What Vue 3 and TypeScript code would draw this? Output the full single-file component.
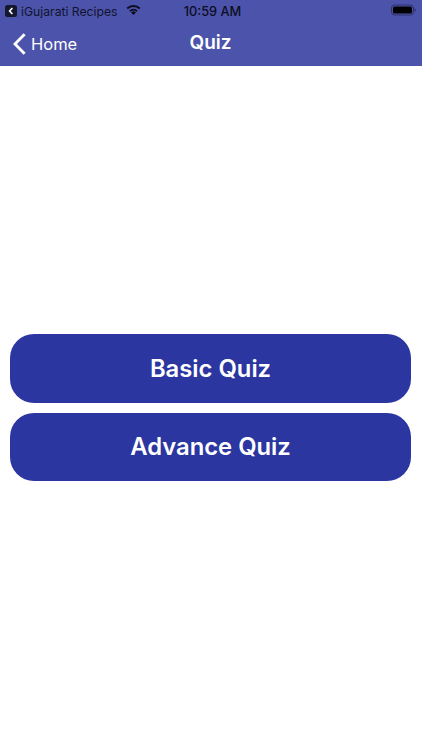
<script setup lang="ts">
const quizzes: string[] = ['Basic Quiz', 'Advance Quiz']
</script>

<template>
  <div class="page">
    <header class="header">
      <div class="status">
        <div class="status-left">
          <svg class="back-app" width="12" height="12" viewBox="0 0 12 12">
            <rect width="12" height="12" rx="2.5" fill="#15172e" />
            <path d="M7.4 3 L4.6 6 L7.4 9" fill="none" stroke="#fff" stroke-width="1.6" />
          </svg>
          <span class="app-name">iGujarati Recipes</span>
          <svg class="wifi" width="15" height="11" viewBox="0 0 15 11">
            <path d="M7.5 10.6 L5.2 8.1 A3.3 3.3 0 0 1 9.8 8.1 Z" fill="#0c0d1c" />
            <path d="M3.6 6.4 A5.6 5.6 0 0 1 11.4 6.4 L10.3 7.5 A4 4 0 0 0 4.7 7.5 Z" fill="#0c0d1c" />
            <path d="M1.2 4 A9 9 0 0 1 13.8 4 L12.6 5.2 A7.3 7.3 0 0 0 2.4 5.2 Z" fill="#0c0d1c" />
          </svg>
        </div>
        <span class="time">10:59 AM</span>
        <svg class="battery" width="25" height="12" viewBox="0 0 25 12">
          <rect x="0.5" y="1" width="22" height="10" rx="3" fill="none" stroke="#2e3066" stroke-width="1" />
          <rect x="2" y="2.5" width="19" height="7" rx="1.6" fill="#000" />
          <rect x="23.4" y="4.5" width="1.2" height="3" rx="0.6" fill="#2e3066" />
        </svg>
      </div>
      <nav class="nav">
        <div class="back">
          <svg width="15" height="24" viewBox="0 0 15 24">
            <path d="M12.6 2.2 L3 12 L12.6 21.8" fill="none" stroke="#fff" stroke-width="2.8" />
          </svg>
          <span>Home</span>
        </div>
        <h1 class="title">Quiz</h1>
      </nav>
    </header>
    <main class="content">
      <button v-for="quiz in quizzes" :key="quiz" class="quiz-button" type="button">{{ quiz }}</button>
    </main>
  </div>
</template>

<style>
html, body { margin: 0; background: #fff; }
</style>

<style scoped>
.page {
  width: 422px;
  height: 750px;
  display: flex;
  flex-direction: column;
  background: #fff;
  font-family: Inter, "Liberation Sans", sans-serif;
  overflow: hidden;
}
.header {
  height: 66px;
  flex: none;
  background: #4b53ab;
  display: flex;
  flex-direction: column;
}
.status {
  height: 22px;
  position: relative;
  display: flex;
  align-items: center;
  justify-content: space-between;
  padding: 0 5px;
  color: #10112a;
}
.status-left {
  display: flex;
  align-items: center;
}
.app-name {
  font-size: 12.2px;
  margin-left: 4px;
  color: #12132c;
}
.wifi { margin-left: 8px; margin-top: -3px; transform: scale(1.1); }
.time {
  position: absolute;
  left: 3px;
  right: 0;
  text-align: center;
  font-size: 12.8px;
  font-weight: 500;
  color: #0d0e24;
  pointer-events: none;
}
.battery { margin-right: 1px; margin-top: -2px; }
.nav {
  position: relative;
  flex: 1;
  display: flex;
  align-items: center;
  justify-content: center;
  padding-bottom: 3px;
}
.back {
  position: absolute;
  left: 12px;
  top: 10px;
  display: flex;
  align-items: center;
  gap: 4px;
  color: #fff;
  font-size: 16.5px;
}
.title {
  margin: 0 0 0 -1px;
  font-size: 19px;
  font-weight: 600;
  color: #fff;
}
.content {
  flex: 1;
  display: flex;
  flex-direction: column;
  gap: 10px;
  padding: 268px 11px 0 10px;
}
.quiz-button {
  height: 68.5px;
  border: 0;
  border-radius: 24px;
  background: #2c36a0;
  color: #fff;
  font-family: inherit;
  font-size: 23.8px;
  font-weight: 600;
  padding: 0;
}
</style>
